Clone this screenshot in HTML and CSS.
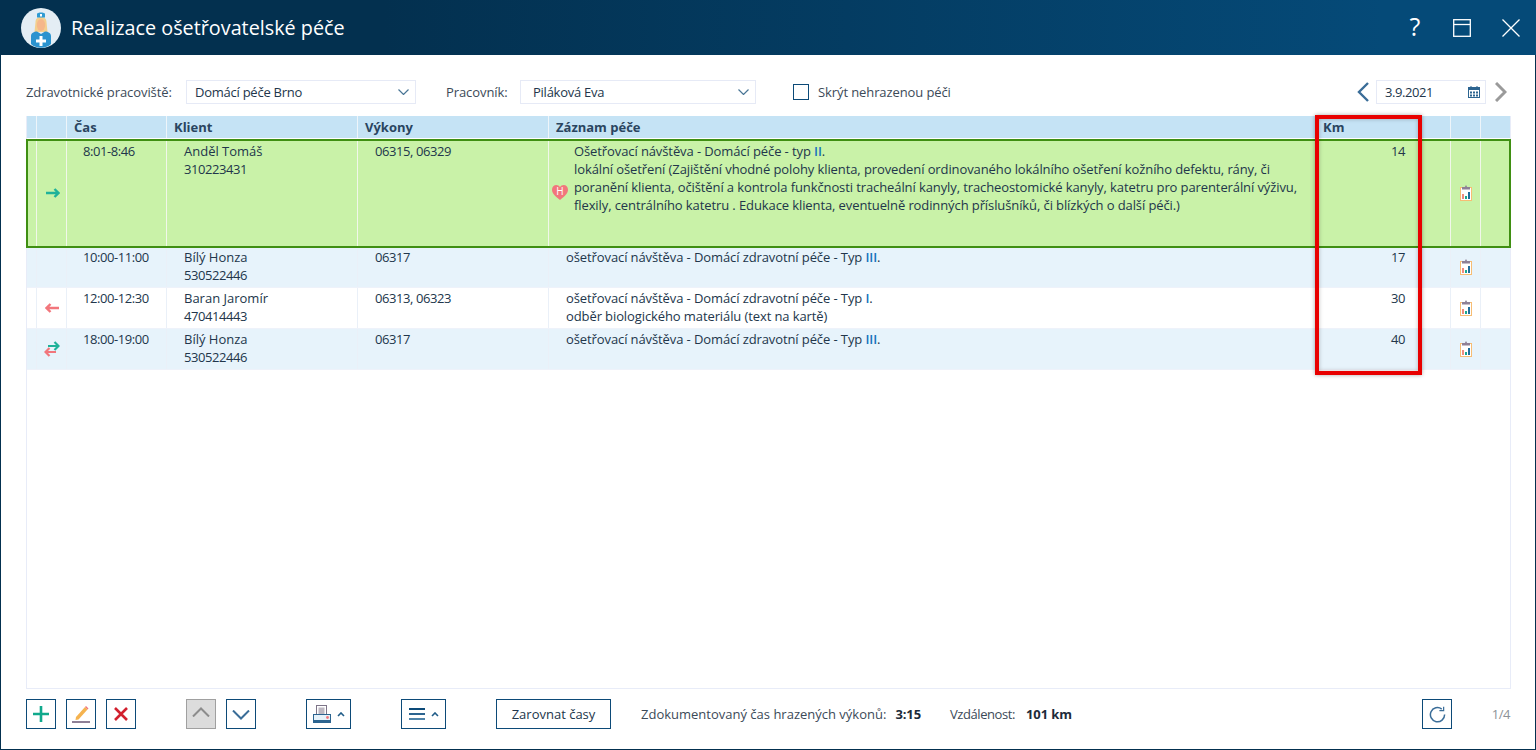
FILE: index.html
```html
<!DOCTYPE html>
<html lang="cs">
<head>
<meta charset="utf-8">
<title>Realizace ošetřovatelské péče</title>
<link rel="stylesheet" href="styles.css">
</head>
<body>
<div class="window">
  <header class="titlebar">
    <svg class="avatar" width="40" height="40" viewBox="0 0 40 40">
      <circle cx="20" cy="20" r="20" fill="#e4edf4"/>
      <path d="M14.500 14c0-3 2-5 5.500-5s5.500 2 5.500 5l1 10h-13z" fill="#f4cf8e"/>
      <path d="M16 5.500c2-1.500 6-1.500 8 0v4h-8z" fill="#2f9bd3"/>
      <path d="M19 6h2v2.500h-2z" fill="#fff"/>
      <ellipse cx="20" cy="17" rx="4.200" ry="6" fill="#f5b78b"/>
      <path d="M10 36V28c0-3 3-4.500 6-4.500l4 2.500 4-2.500c3 0 6 1.500 6 4.500v8c-5 5-15 5-20 0z" fill="#2b93cf"/>
      <path d="M18.500 28h3v3.500H25v3h-3.500V38h-3v-3.500H15v-3h3.500z" fill="#fff"/>
    </svg>
    <h1 class="title">Realizace ošetřovatelské péče</h1>
    <div class="win-actions">
      <span class="help">?</span>
      <svg class="restore" width="18" height="18" viewBox="0 0 18 18" fill="none" stroke="#fff" stroke-width="1.300"><rect x=".7" y=".7" width="16.600" height="16.600"/><path d="M1 5.500h16"/></svg>
      <svg width="18" height="18" viewBox="0 0 18 18" fill="none" stroke="#fff" stroke-width="1.300"><path d="M.5.500l17 17M17.500.500l-17 17"/></svg>
    </div>
  </header>

  <main class="content">
    <div class="filters">
      <label class="lbl">Zdravotnické pracoviště:</label>
      <div class="select select-a">Domácí péče Brno
        <svg class="chev" width="11" height="6" viewBox="0 0 11 6" fill="none" stroke="#4a7696" stroke-width="1.200"><path d="M.5.500l5 5 5-5"/></svg>
      </div>
      <label class="lbl lbl-b">Pracovník:</label>
      <div class="select select-b">Piláková Eva
        <svg class="chev" width="11" height="6" viewBox="0 0 11 6" fill="none" stroke="#4a7696" stroke-width="1.200"><path d="M.5.500l5 5 5-5"/></svg>
      </div>
      <span class="checkbox"></span>
      <span class="lbl-c">Skrýt nehrazenou péči</span>
      <div class="datebox">
        <svg width="12" height="20" viewBox="0 0 12 20" fill="none" stroke="#3a6d98" stroke-width="2.400"><path d="M11 1L2 10l9 9"/></svg>
        <div class="date"><span class="num">3.9.2021</span>
          <svg class="cal" width="12" height="12" viewBox="0 0 12 12"><rect x=".5" y="1.500" width="11" height="10" fill="#fff" stroke="#2c6490"/><rect x="0" y="1" width="12" height="3" fill="#2c6490"/><rect x="2.500" y="0" width="1" height="2" fill="#2c6490"/><rect x="8.500" y="0" width="1" height="2" fill="#2c6490"/><path d="M2 5.500h2v2H2zM5 5.500h2v2H5zM8 5.500h2v2H8zM2 8.500h2v2H2zM5 8.500h2v2H5zM8 8.500h2v2H8z" fill="#2c6490"/></svg>
        </div>
        <svg class="next" width="12" height="20" viewBox="0 0 12 20" fill="none" stroke="#9a9a9a" stroke-width="3"><path d="M1 1l9 9-9 9"/></svg>
      </div>
    </div>

    <section class="grid">
      <div class="row head">
        <div class="c"></div><div class="c"></div>
        <div class="c">Čas</div><div class="c">Klient</div><div class="c">Výkony</div><div class="c">Záznam péče</div><div class="c">Km</div><div class="c"></div><div class="c"></div>
      </div>

      <div class="row selected">
        <div class="c"></div>
        <div class="c ico"><svg class="arrow-r" width="14" height="10" viewBox="0 0 14 10" fill="none" stroke="#1fb29a" stroke-width="2.400"><path d="M0 5h12.500M8.500 1L12.500 5l-4 4"/></svg></div>
        <div class="c time num">8:01-8:46</div>
        <div class="c client">Anděl Tomáš<br><span class="num">310223431</span></div>
        <div class="c code num">06315, 06329</div>
        <div class="c record with-heart">
          <svg class="heart" width="16" height="15" viewBox="0 0 16 15"><path d="M8 15C3 11 0 8.500 0 4.500 0 2 2 0 4.300 0 5.800 0 7.200.8 8 2c.8-1.200 2.200-2 3.700-2C14 0 16 2 16 4.500 16 8.500 13 11 8 15z" fill="#f2767c"/><text x="8" y="10" class="heart-h">H</text></svg>
          Ošetřovací návštěva - Domácí péče - typ <b class="roman">II</b>.<br>lokální ošetření (Zajištění vhodné polohy klienta, provedení ordinovaného lokálního ošetření kožního defektu, rány, či poranění klienta, očištění a kontrola funkčnosti tracheální kanyly, tracheostomické kanyly, katetru pro parenterální výživu, flexily, centrálního katetru . Edukace klienta, eventuelně rodinných příslušníků, či blízkých o další péči.)
        </div>
        <div class="c km num">14</div>
        <div class="c ico"><svg class="clip clip-up" width="12" height="16" viewBox="0 0 12 16"><use href="#clipboard"/></svg></div>
        <div class="c"></div>
      </div>

      <div class="row alt">
        <div class="c"></div>
        <div class="c ico"></div>
        <div class="c time num">10:00-11:00</div>
        <div class="c client">Bílý Honza<br><span class="num">530522446</span></div>
        <div class="c code num">06317</div>
        <div class="c record">ošetřovací návštěva - Domácí zdravotní péče - Typ <b class="roman">III</b>.</div>
        <div class="c km num">17</div>
        <div class="c ico"><svg class="clip" width="12" height="16" viewBox="0 0 12 16"><use href="#clipboard"/></svg></div>
        <div class="c"></div>
      </div>

      <div class="row">
        <div class="c"></div>
        <div class="c ico"><svg width="14" height="10" viewBox="0 0 14 10" fill="none" stroke="#f2767c" stroke-width="2.400"><path d="M14 5H1.500M5.500 1L1.500 5l4 4"/></svg></div>
        <div class="c time num">12:00-12:30</div>
        <div class="c client">Baran Jaromír<br><span class="num">470414443</span></div>
        <div class="c code num">06313, 06323</div>
        <div class="c record">ošetřovací návštěva - Domácí zdravotní péče - Typ <b class="roman">I</b>.<br>odběr biologického materiálu (text na kartě)</div>
        <div class="c km num">30</div>
        <div class="c ico"><svg class="clip" width="12" height="16" viewBox="0 0 12 16"><use href="#clipboard"/></svg></div>
        <div class="c"></div>
      </div>

      <div class="row alt">
        <div class="c"></div>
        <div class="c ico"><svg width="16" height="16" viewBox="0 0 16 16" fill="none" stroke-width="2.200"><path d="M4 5h10.500M10.500 1l4 4-4 4" stroke="#1fb29a"/><path d="M12 11H1.500M5.500 7l-4 4 4 4" stroke="#f2767c"/></svg></div>
        <div class="c time num">18:00-19:00</div>
        <div class="c client">Bílý Honza<br><span class="num">530522446</span></div>
        <div class="c code num">06317</div>
        <div class="c record">ošetřovací návštěva - Domácí zdravotní péče - Typ <b class="roman">III</b>.</div>
        <div class="c km num">40</div>
        <div class="c ico"><svg class="clip" width="12" height="16" viewBox="0 0 12 16"><use href="#clipboard"/></svg></div>
        <div class="c"></div>
      </div>

      <div class="highlight"></div>
    </section>

    <footer class="toolbar">
      <div class="btn-group">
        <button class="btn"><svg width="16" height="16" viewBox="0 0 16 16" fill="none" stroke="#10a98c" stroke-width="2.600"><path d="M8 0v16M0 8h16"/></svg></button>
        <button class="btn"><svg width="18" height="18" viewBox="0 0 18 18"><path d="M4 12L13 2l2.500 2.500-9 10-3 .5z" fill="#f5b34f"/><path d="M13 2l1-1 2.500 2.500-1 1z" fill="#f2767c"/><rect x="0" y="16" width="18" height="2" fill="#8e8096"/></svg></button>
        <button class="btn"><svg width="14" height="14" viewBox="0 0 14 14" fill="none" stroke="#d2202e" stroke-width="2.600"><path d="M1 1l12 12M13 1L1 13"/></svg></button>
      </div>
      <div class="btn-group group-move">
        <button class="btn disabled"><svg class="up" width="18" height="10" viewBox="0 0 18 10" fill="none" stroke="#8c8c8c" stroke-width="2"><path d="M1 9.500L9 1.500l8 8"/></svg></button>
        <button class="btn"><svg class="down" width="18" height="10" viewBox="0 0 18 10" fill="none" stroke="#3a6d98" stroke-width="2"><path d="M1 .5L9 8.500l8-8"/></svg></button>
      </div>
      <button class="btn wide print">
        <svg width="18" height="18" viewBox="0 0 18 18"><rect x="3.500" y=".5" width="10" height="12" fill="#fff" stroke="#7d7488"/><rect x="5.500" y="2.500" width="6" height="7" fill="#bdb8c2"/><rect x=".5" y="9.500" width="17" height="6" fill="#e6f2fa" stroke="#2c6490"/><rect x="0" y="15" width="18" height="3" fill="#2c6490"/><circle cx="14.500" cy="12.500" r="1.400" fill="#f2767c"/></svg>
        <svg class="caret" width="8" height="5" viewBox="0 0 8 5" fill="none" stroke="#1f5c88" stroke-width="1.600"><path d="M1 4l3-3 3 3"/></svg>
      </button>
      <button class="btn wide menu">
        <svg width="16" height="12" viewBox="0 0 16 12"><rect width="16" height="2" fill="#0c4a78"/><rect y="5" width="16" height="2" fill="#2c6490"/><rect y="10" width="16" height="2" fill="#4f83a8"/></svg>
        <svg class="caret" width="8" height="5" viewBox="0 0 8 5" fill="none" stroke="#1f5c88" stroke-width="1.600"><path d="M1 4l3-3 3 3"/></svg>
      </button>
      <button class="btn text-btn">Zarovnat časy</button>
      <span class="stat stat-a">Zdokumentovaný čas hrazených výkonů:</span><b class="val val-a">3:15</b>
      <span class="stat stat-b">Vzdálenost:</span><b class="val val-b">101 km</b>
      <button class="btn refresh"><svg width="17" height="17" viewBox="0 0 18 18" fill="none" stroke="#3a6d98" stroke-width="1.600"><path d="M13.500 3.200A7.500 7.500 0 1 0 16.500 9"/><path d="M11 4.800h4.500V.8" stroke-width="1.300"/></svg></button>
      <span class="pager num">1/4</span>
    </footer>
  </main>
</div>

<svg class="defs" width="0" height="0">
  <symbol id="clipboard" viewBox="0 0 12 16">
    <rect x=".5" y="2.500" width="11" height="13" fill="#fff" stroke="#f7bd74"/>
    <path d="M2 2h3l.5-1.500h1L7 2h3v2.500H2z" fill="#8e8096"/>
    <rect x="2" y="9" width="2" height="5" fill="#ef8b80"/>
    <rect x="5" y="11" width="2" height="3" fill="#1ba88f"/>
    <rect x="8" y="7" width="2" height="7" fill="#1f6d9c"/>
  </symbol>
</svg>
</body>
</html>
```
FILE: styles.css
```css
* { box-sizing: border-box; }
html, body { margin: 0; padding: 0; height: 100%; overflow: hidden; }
body {
  font-family: "Open Sans", "Noto Sans", sans-serif;
  font-size: 13px;
  color: #22364b;
  background: #fff;
}
.num { letter-spacing: -0.42px; }
.window {
  width: 1536px;
  height: 750px;
  display: flex;
  flex-direction: column;
  border: 1px solid #03304f;
  border-top: 0;
}
.titlebar {
  height: 55px;
  margin: 0 -1px;
  flex: none;
  display: flex;
  align-items: center;
  padding: 0 16px 0 21px;
  background: linear-gradient(90deg, #03304f 0%, #03304f 25%, #054a78 90%);
  color: #fff;
}
.avatar { flex: none; }
.title {
  margin: 0 0 0 10px;
  font-size: 19.8px;
  font-weight: 400;
  line-height: 1;
  flex: 1;
}
.win-actions { display: flex; align-items: center; }
.help { font-size: 25px; width: 18px; text-align: center; margin-right: 29px; line-height: 1; position: relative; top: -1px; }
.restore { margin-right: 31px; }
.content {
  flex: 1;
  display: flex;
  flex-direction: column;
  padding: 25px 25px 0 25px;
  min-height: 0;
}
.filters {
  height: 24px;
  flex: none;
  display: flex;
  align-items: center;
  margin-bottom: 12px;
}
.lbl { color: #3c4a58; width: 160px; flex: none; letter-spacing: -0.08px; }
.select {
  position: relative;
  height: 24px;
  line-height: 23px;
  padding-left: 8px;
  border: 1px solid #e6eaf6;
  background: #fff;
  flex: none;
  letter-spacing: -0.25px;
}
.select-a { width: 230px; }
.select-b { width: 236px; padding-left: 12px; }
.chev { position: absolute; right: 6px; top: 8px; }
.lbl-b { width: 74px; margin-left: 30px; }
.checkbox {
  width: 16px; height: 16px; flex: none;
  border: 1px solid #0c4a78; background: #fff;
  margin-left: 37px;
}
.lbl-c { margin-left: 9px; color: #3c4a58; letter-spacing: -0.1px; }
.datebox { margin-left: auto; margin-right: 3px; display: flex; align-items: center; gap: 7px; }
.next { margin-left: 2px; }
.date {
  position: relative;
  width: 110px; height: 24px; line-height: 23px;
  padding-left: 8px;
  border: 1px solid #e6eaf6;
}
.cal { position: absolute; right: 5px; top: 5px; }
.grid {
  position: relative;
  flex: none;
  height: 573px;
  width: 1485px;
  border: 1px solid #e8ecf8;
  border-top: 0;
}
.row {
  display: grid;
  grid-template-columns: 10px 30px 100px 191px 191px 767px 135px 30px 1fr;
  height: 41px;
  line-height: 18px;
  border-bottom: 1px solid #eef2fa;
}
.c { border-right: 1px solid #eaf0f8; min-width: 0; }
.c:last-child { border-right: 0; }
.head {
  height: 22px;
  background: #c5e3f5;
  font-weight: 700;
  color: #2a4560;
  line-height: 22px;
  margin-bottom: 1px;
  border-bottom: 0;
}
.head .c { padding-left: 7px; border-right-color: #eef5fa; }
.alt { background: #e7f3fb; }
.selected {
  position: relative;
  z-index: 1;
  height: 109px;
  background: #c9f2a8;
  border: 2px solid #3f8f12;
  margin: 0 -1px -1px -1px;
  grid-template-columns: 9px 30px 100px 191px 191px 767px 135px 30px 1fr;
}
.selected .c { border-right-color: #f1f7ea; }
.time, .client, .code { padding-top: 1px; }
.time { padding-left: 16px; }
.client, .code { padding-left: 17px; }
.record { padding: 1px 12px 0 17px; position: relative; letter-spacing: -0.1px; }
.with-heart { padding-left: 25px; }
.heart { position: absolute; left: 3px; top: 44px; }
.heart-h { font-size: 10px; font-weight: 400; fill: #fff; text-anchor: middle; font-family: "Open Sans", sans-serif; letter-spacing: 0; }
.roman { font-weight: 600; color: #1a72bd; }
.km { text-align: right; padding-right: 45px; padding-top: 1px; }
.ico { display: flex; align-items: center; justify-content: center; }
.arrow-r { margin-left: 3px; margin-bottom: 2px; }
.clip-up { margin-bottom: 2px; }
.defs { position: absolute; }
.highlight {
  position: absolute;
  z-index: 2;
  left: 1288px;
  top: -1px;
  width: 107px;
  height: 260px;
  border: 4px solid #e80000;
  box-shadow: 0 0 4px rgba(0,0,0,.35), inset 0 0 4px rgba(0,0,0,.25);
  pointer-events: none;
}
.toolbar {
  flex: 1;
  display: flex;
  align-items: center;
  padding-bottom: 10px;
}
.btn-group { display: flex; gap: 10px; }
.group-move { margin-left: 50px; }
.btn {
  width: 30px; height: 30px; flex: none;
  padding: 0;
  display: inline-flex; align-items: center; justify-content: center;
  background: #fff;
  border: 1px solid #0c4a78;
  font: inherit;
  color: #22364b;
}
.disabled { background: #dcdcdc; border-color: #a0a0a0; }
.up { margin-bottom: 4px; }
.down { margin-top: 2px; }
.wide { gap: 6px; }
.print { width: 45px; margin-left: 50px; }
.menu { width: 45px; margin-left: 50px; }
.text-btn { width: 115px; margin-left: 50px; }
.stat { color: #3c4a58; flex: none; }
.stat-a { margin-left: 30px; }
.val { color: #1c2b3a; font-weight: 700; flex: none; }
.val-a { margin-left: 9px; letter-spacing: -0.1px; }
.stat-b { margin-left: 29px; letter-spacing: -0.42px; }
.val-b { margin-left: 11px; letter-spacing: -0.1px; }
.refresh { margin-left: auto; }
.pager { width: 58px; text-align: right; color: #8c9298; flex: none; }
```
